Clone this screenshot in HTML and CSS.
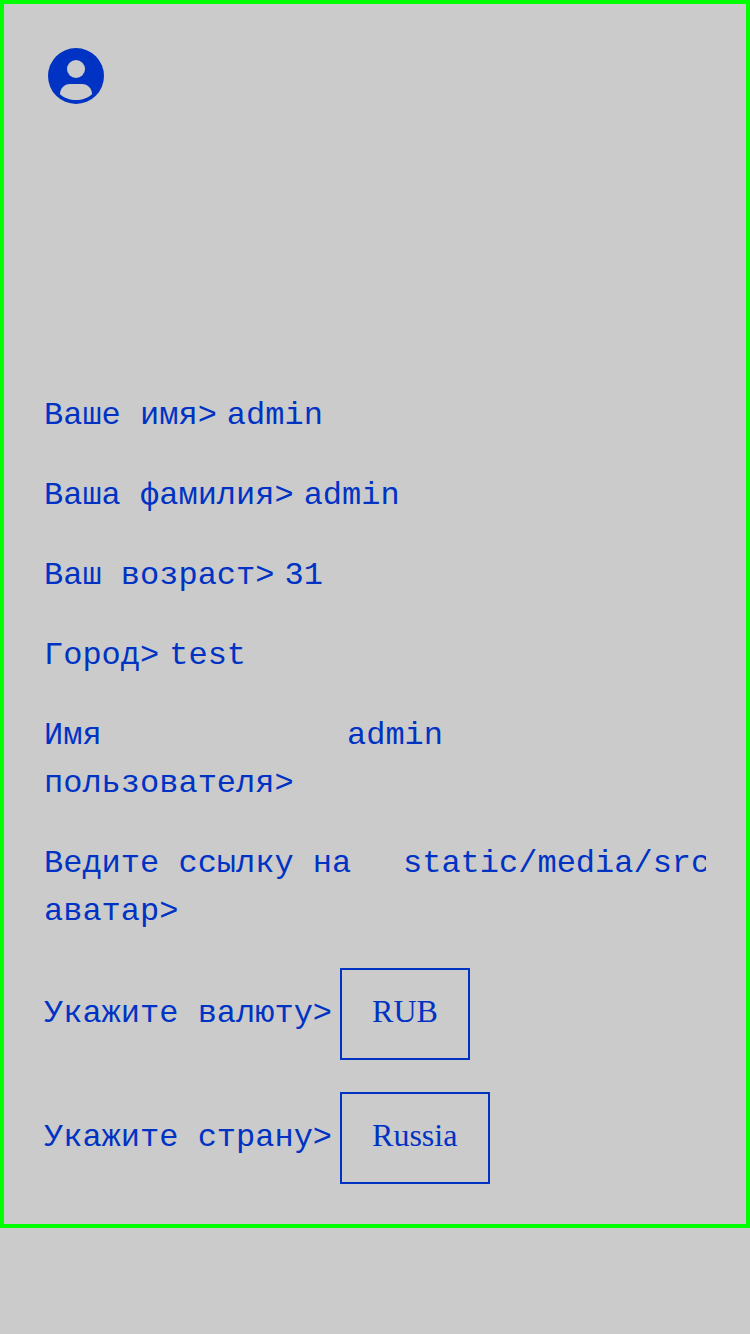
FILE: index.html
```html
<!DOCTYPE html>
<html lang="ru">
<head>
<meta charset="utf-8">
<title>Профиль</title>
<link rel="stylesheet" href="styles.css">
</head>
<body>
<main class="frame">
  <header class="header">
    <svg class="avatar" viewBox="0 0 56 56" aria-hidden="true">
      <circle class="avatar-disc" cx="28" cy="28" r="28"/>
      <circle class="avatar-figure" cx="28" cy="21" r="9"/>
      <path class="avatar-figure" d="M12 46.200C12 40.500 16.300 36 22 36H34C39.700 36 44 40.500 44 46.200C40 50 34 52 28 52S16 50 12 46.200Z"/>
    </svg>
  </header>
  <form class="form">
    <div class="row"><span class="label">Ваше имя&gt;</span><span class="value">admin</span></div>
    <div class="row"><span class="label">Ваша фамилия&gt;</span><span class="value">admin</span></div>
    <div class="row"><span class="label">Ваш возраст&gt;</span><span class="value">31</span></div>
    <div class="row"><span class="label">Город&gt;</span><span class="value">test</span></div>
    <div class="row"><span class="label label-user">Имя пользователя&gt;</span><span class="value">admin</span></div>
    <div class="row"><span class="label label-link">Ведите ссылку на аватар&gt;</span><span class="value">static/media/src</span></div>
    <div class="row row-select"><span class="label">Укажите валюту&gt;</span><span class="select">RUB</span></div>
    <div class="row row-select"><span class="label">Укажите страну&gt;</span><span class="select select-country">Russia</span></div>
  </form>
</main>
</body>
</html>
```
FILE: styles.css
```css
* { box-sizing: border-box; }
body {
  margin: 0;
  background: #cbcbcb;
  color: #0033c4;
  font: 32px/48px "Liberation Mono", monospace;
}
.frame {
  height: 1228px;
  padding: 44px 40px 40px;
  border: 4px solid #00ff00;
}
.header { height: 344px; padding-left: 4px; }
.avatar { display: block; width: 56px; height: 56px; }
.avatar-disc { fill: #0033c4; }
.avatar-figure { fill: #cbcbcb; }
.form { display: flex; flex-direction: column; gap: 32px; }
.row { display: flex; align-items: flex-start; }
.label { flex: none; }
.value { flex: 1; min-width: 0; margin-left: 10px; overflow: hidden; white-space: nowrap; }
.label-user { width: 293px; }
.label-link { width: 349px; }
.row-select { align-items: center; }
.select {
  height: 92px;
  margin-left: 8px;
  padding: 17px 30px 19px;
  border: 2px solid #0033c4;
  font-family: "Liberation Serif", serif;
}
.select-country { width: 150px; }
```
